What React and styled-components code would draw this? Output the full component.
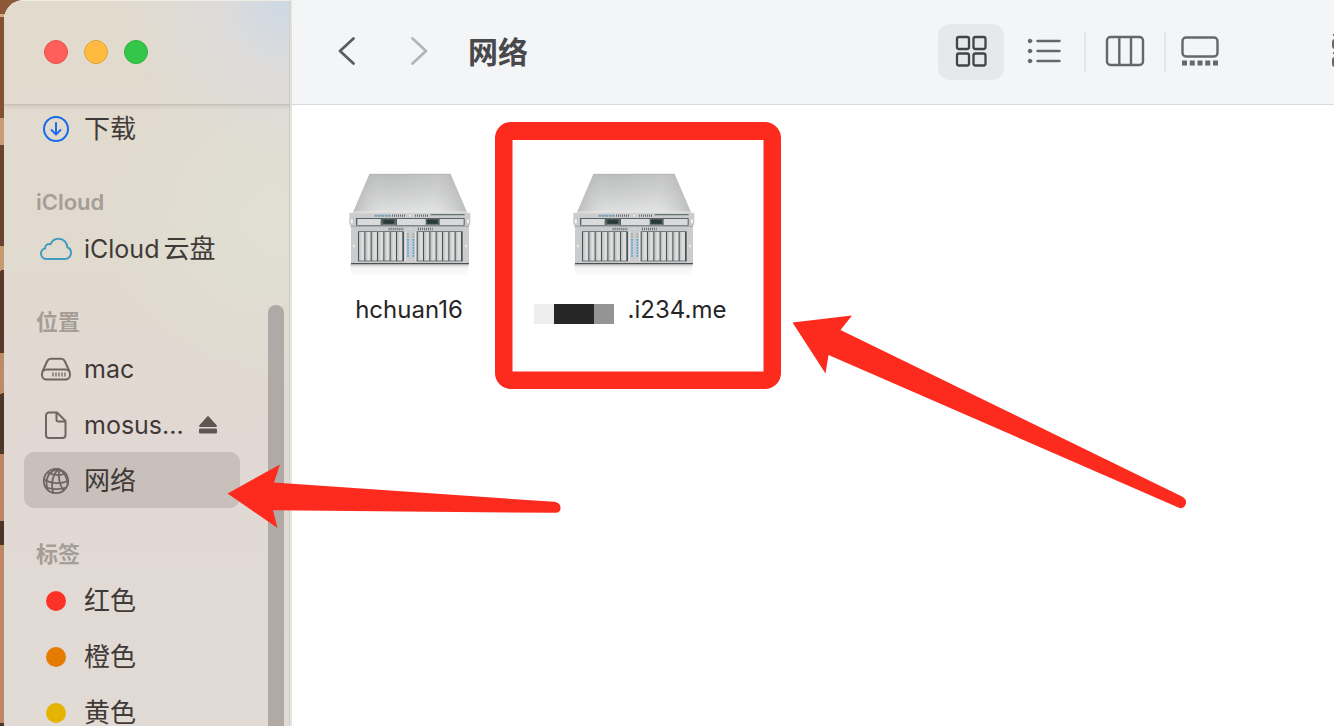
import React from 'react';
import styled, { createGlobalStyle } from 'styled-components';

const GlobalStyle = createGlobalStyle`
  * {
    box-sizing: border-box;
  }
  body {
    margin: 0;
    font-family: Inter, 'Noto Sans CJK SC', sans-serif;
    overflow: hidden;
  }
  button {
    border: 0;
    padding: 0;
    background: none;
    font: inherit;
    color: inherit;
  }
  svg {
    display: block;
    flex: none;
  }
`;

const Desktop = styled.div`
  position: relative;
  height: 100vh;
  padding-left: 4px;
  overflow: hidden;
  background: linear-gradient(
    172deg,
    #8c5838 0 14px,
    #d8a680 14px 17px,
    #84502f 17px 117px,
    #c89d75 117px 144px,
    #6a422e 144px 244px,
    #c69a70 244px 268px,
    #58392a 268px 350px,
    #bd8b66 350px 390px,
    #4e3629 390px 450px,
    #bd8766 450px 516px,
    #4a3528 516px 540px,
    #bd8766 540px 716px,
    #4a3528 716px
  );
`;

const Window = styled.div`
  display: flex;
  height: 100%;
  border-top-left-radius: 20px;
  overflow: hidden;
  background: #fff;
`;

const Sidebar = styled.aside`
  position: relative;
  display: flex;
  flex-direction: column;
  flex: none;
  width: 288px;
  border-right: 2px solid #e6e6e1;
  box-shadow: inset 0 1px 0 #f0ece6, inset -1px 0 0 #cfcdc6;
  background:
    radial-gradient(circle at 100% 0, #cdd8e5 0, rgba(218, 220, 224, 0.7) 70px, rgba(224, 219, 214, 0) 170px),
    radial-gradient(circle at 95% 220px, #e0e0d3 0, rgba(224, 224, 211, 0) 170px),
    linear-gradient(#e2dacd, #e1dacf 35%, #e1d8d3 60%, #e1dad5);
`;

const SidebarHeader = styled.div`
  display: flex;
  flex: none;
  align-items: center;
  gap: 16px;
  height: 105px;
  padding-left: 40px;
  border-bottom: 1px solid #c5c1ba;
  box-shadow: 0 2px 3px rgba(90, 80, 70, 0.12);
`;

const TrafficLight = styled.button`
  width: 24px;
  height: 24px;
  border: 1px solid ${({ $edge }) => $edge};
  border-radius: 50%;
  background: ${({ $color }) => $color};
`;

const SidebarScroll = styled.nav`
  flex: 1;
  min-height: 0;
  overflow: hidden;
`;

/* the list is scrolled a little way under the header */
const SidebarList = styled.div`
  margin: -5px 50px 0 20px;
`;

const SectionTitle = styled.h2`
  margin: 0;
  padding: 28px 0 0 12px;
  font-size: 22px;
  font-weight: 600;
  line-height: 36px;
  color: #a59d96;
`;

const SidebarItem = styled.button`
  display: flex;
  align-items: center;
  gap: 12px;
  width: 100%;
  height: 56px;
  padding: 2px 0 0 16px;
  border-radius: 10px;
  line-height: 32px;
  text-align: left;
  white-space: nowrap;
  color: #3f3a37;
  background: ${({ $active }) => ($active ? '#c9c0bb' : 'transparent')};
`;

const IconSlot = styled.span`
  display: flex;
  justify-content: center;
  width: 32px;
  color: #6e6662;
`;

const ItemName = styled.span`
  display: flex;
  align-items: baseline;
  gap: 4px;
`;

const Latin = styled.span`
  font-size: 25px;
`;

const Hanzi = styled.span`
  font-size: 26px;
`;

const Eject = styled.span`
  padding-left: 3px;
`;

const Tag = styled.span`
  width: 20px;
  height: 20px;
  border-radius: 50%;
  background: ${({ $color }) => $color};
`;

const Scrollbar = styled.div`
  position: absolute;
  top: 305px;
  right: 6px;
  bottom: 0;
  width: 16px;
  border-radius: 8px 8px 0 0;
  background: #afaaa5;
`;

const Main = styled.main`
  display: flex;
  flex: 1;
  flex-direction: column;
  min-width: 0;
`;

const Toolbar = styled.header`
  display: flex;
  flex: none;
  align-items: center;
  height: 105px;
  padding-left: 37px;
  border-bottom: 1px solid #dadbdc;
  overflow: hidden;
  background: #f4f5f7;
`;

const NavButtons = styled.div`
  display: flex;
  gap: 36px;
`;

const NavButton = styled.button`
  display: flex;
  align-items: center;
  justify-content: center;
  width: 36px;
  height: 56px;
  padding-bottom: 2px;
  color: ${({ disabled }) => (disabled ? '#b4b5b7' : '#5b5c5e')};
`;

const Title = styled.h1`
  flex: 1;
  margin: 0 0 0 31px;
  font-size: 30px;
  font-weight: 700;
  line-height: 40px;
  color: #49494b;
`;

const ViewButtons = styled.div`
  display: flex;
  align-items: center;
  gap: 7px;
`;

const ViewButton = styled.button`
  display: flex;
  align-items: center;
  justify-content: center;
  width: ${({ $width }) => $width || 66}px;
  height: 56px;
  padding-bottom: 2px;
  border-radius: 12px;
  color: ${({ $active }) => ($active ? '#434446' : '#66676a')};
  background: ${({ $active }) => ($active ? '#e7e8ea' : 'transparent')};
`;

const Divider = styled.span`
  width: 2px;
  height: 40px;
  background: #e5e6e8;
`;

/* runs off the right edge of the window */
const GroupButton = styled.button`
  flex: none;
  width: 36px;
  margin: 0 -34px 0 105px;
  padding-bottom: 2px;
  color: #66676a;
`;

const Files = styled.div`
  display: flex;
  flex-wrap: wrap;
  padding: 60px 6px;
`;

const File = styled.button`
  display: flex;
  flex-direction: column;
  align-items: center;
  gap: 15px;
  width: 224px;
`;

const FileName = styled.span`
  display: flex;
  align-items: center;
  gap: 14px;
  padding-right: ${({ $masked }) => ($masked ? '8px' : '2px')};
  font-size: 24px;
  line-height: 30px;
  color: #262626;
`;

const Mask = styled.span`
  width: 80px;
  height: 20px;
  margin-top: 8px;
  background: linear-gradient(90deg, #ededed 0 20px, #262626 20px 60px, #949494 60px);
`;

const Annotations = styled.svg`
  position: absolute;
  top: 0;
  left: 0;
  pointer-events: none;
`;

const DownloadIcon = () => (
  <svg width="28" height="28" viewBox="0 0 28 28" fill="none" stroke="#1a6be8" strokeWidth="2" strokeLinecap="round" strokeLinejoin="round">
    <circle cx="14" cy="14" r="12" />
    <path d="M14 8v11M9.500 15l4.500 4.500 4.500-4.500" />
  </svg>
);

const CloudIcon = () => (
  <svg width="32" height="24" viewBox="0 0 32 24" fill="none" stroke="#409dc0" strokeWidth="2" strokeLinejoin="round">
    <path d="M7 22C3.500 22 1 19.600 1 16.600c0-2.700 1.700-4.600 4.200-5.200-.4-3.200 2.600-5.200 5.400-4.200C12 3.600 15 1.700 18.500 1.700c5 0 8.700 3.700 8.800 8.600 2.300.8 3.700 2.900 3.700 5.500 0 3.500-2.700 6.200-6.300 6.200z" />
  </svg>
);

const DriveIcon = () => (
  <svg width="30" height="24" viewBox="0 0 30 24" fill="none" stroke="currentColor" strokeWidth="2" strokeLinejoin="round">
    <path d="M1.500 14.500 6.300 4C7.100 2.300 8 1.700 9.700 1.700h10.600c1.700 0 2.600.6 3.400 2.300l4.800 10.500" />
    <rect x="1" y="12.500" width="28" height="10" rx="4.500" />
    <path d="M12 15.500v4M15 15.500v4M18 15.500v4M21 15.500v4M24 15.500v4" strokeWidth="1.300" />
  </svg>
);

const DocumentIcon = () => (
  <svg width="24" height="28" viewBox="0 0 24 28" fill="none" stroke="currentColor" strokeWidth="2" strokeLinejoin="round">
    <path d="M5 1.500h8L21.500 10v14a3 3 0 0 1-3 3H5a3 3 0 0 1-3-3V4.500a3 3 0 0 1 3-3z" />
    <path d="M12.500 1.500v7a2 2 0 0 0 2 2h7" />
  </svg>
);

const EjectIcon = () => (
  <svg width="18" height="18" viewBox="0 0 18 18" fill="#5f5753">
    <path d="M8.200.6a1.200 1.200 0 0 1 1.600 0l7.800 8.600c.7.800.3 1.800-.7 1.800H1.100c-1 0-1.400-1-.7-1.800z" />
    <rect y="12.500" width="18" height="5" rx="1" />
  </svg>
);

const GlobeIcon = () => (
  <svg width="28" height="28" viewBox="0 0 28 28" fill="none" stroke="currentColor" strokeWidth="1.800" strokeLinecap="round">
    <circle cx="14" cy="14" r="12.200" />
    <path d="M17 2.200C11 6 8.500 16 11.200 25.800M17 2.200C6.500 3.500 2.500 11.500 5.500 22.500M17 2.200c-.8 7.800.5 15.800 4.500 21.500M17 2.200c5.500 3.300 8.300 8.800 8.600 15" />
    <path d="M6 5.500c5.500 3 11.500 3.400 17.300 1M2 12.500c7 4.300 16.500 4.700 24 1.500M3.500 20c5.500 2.600 14.500 3 20.500.5" />
  </svg>
);

const Chevron = ({ flip }) => (
  <svg width="20" height="32" viewBox="0 0 20 32" fill="none" stroke="currentColor" strokeWidth="2.800" strokeLinecap="round" strokeLinejoin="round">
    <path d={flip ? 'M3.500 3.500 17 16 3.500 28.500' : 'M16.500 3.500 3 16l13.500 12.500'} />
  </svg>
);

const GridIcon = () => (
  <svg width="32" height="32" viewBox="0 0 32 32" fill="none" stroke="currentColor" strokeWidth="2.300">
    <rect x="2" y="2" width="12" height="12" rx="2" />
    <rect x="18.500" y="2" width="12" height="12" rx="2" />
    <rect x="2" y="18.500" width="12" height="12" rx="2" />
    <rect x="18.500" y="18.500" width="12" height="12" rx="2" />
  </svg>
);

const ListIcon = () => (
  <svg width="34" height="26" viewBox="0 0 34 26" fill="currentColor" stroke="currentColor" strokeLinecap="round">
    <circle cx="3" cy="3" r="1.800" />
    <circle cx="3" cy="13" r="1.800" />
    <circle cx="3" cy="23" r="1.800" />
    <path d="M10.500 3h22M10.500 13h22M10.500 23h22" strokeWidth="2.400" />
  </svg>
);

const ColumnsIcon = () => (
  <svg width="40" height="32" viewBox="0 0 40 32" fill="none" stroke="currentColor" strokeWidth="2.400">
    <rect x="2" y="2" width="36" height="28" rx="3.500" />
    <path d="M14.300 2v28M26 2v28" />
  </svg>
);

const GalleryIcon = () => (
  <svg width="38" height="30" viewBox="0 0 38 30" fill="none" stroke="currentColor" strokeWidth="2.400">
    <rect x="1.500" y="1.500" width="35" height="19" rx="3.500" />
    <path d="M1 27h36" strokeWidth="5" strokeDasharray="5 2.750" />
  </svg>
);

const GroupIcon = () => (
  <svg width="36" height="36" viewBox="0 0 36 36" fill="none" stroke="currentColor" strokeWidth="2">
    <path d="M1 2h34M1 20h34" />
    <rect x="1" y="7" width="8" height="8" rx="2" />
    <rect x="1" y="25" width="8" height="8" rx="2" />
  </svg>
);

const BAYS = [0, 1, 2, 3, 4, 5, 6];

const ServerIcon = () => (
  <svg width="140" height="115" viewBox="0 0 420 345">
    <defs>
      <linearGradient id="lid" x1="0" y1="0" x2="0" y2="1">
        <stop offset="0" stopColor="#b4b5b6" />
        <stop offset="0.5" stopColor="#c6c7c8" />
        <stop offset="1" stopColor="#dcdddd" />
      </linearGradient>
      <linearGradient id="lidShade" x1="0" y1="0" x2="1" y2="0">
        <stop offset="0" stopColor="#9a9b9c" stopOpacity="0.5" />
        <stop offset="0.3" stopColor="#ffffff" stopOpacity="0.1" />
        <stop offset="0.7" stopColor="#ffffff" stopOpacity="0.2" />
        <stop offset="1" stopColor="#9a9b9c" stopOpacity="0.5" />
      </linearGradient>
      <linearGradient id="bay" x1="0" y1="0" x2="1" y2="0">
        <stop offset="0" stopColor="#b9bdbd" />
        <stop offset="0.6" stopColor="#dfe2e1" />
        <stop offset="1" stopColor="#ced2d1" />
      </linearGradient>
      <linearGradient id="floor" x1="0" y1="0" x2="0" y2="1">
        <stop offset="0" stopColor="#c9c9c9" />
        <stop offset="0.25" stopColor="#f2f2f2" />
        <stop offset="1" stopColor="#ffffff" />
      </linearGradient>
    </defs>
    <path d="M30 298h356l-6 38H36z" fill="url(#floor)" />
    <path d="M88 28h244l50 116H38z" fill="url(#lid)" />
    <path d="M88 28h244l50 116H38z" fill="url(#lidShade)" />
    <path d="M88 28h244" stroke="#a3a4a5" strokeWidth="2" />
    <path d="M40 141h340" stroke="#e6e6e6" strokeWidth="3" />
    <path d="M28 144h363v36h-4v118H33V180h-5z" fill="#cbcccd" />
    <path d="M28 144h363" stroke="#dedede" strokeWidth="2" />
    <path d="M104 152h50" stroke="#789db5" strokeWidth="6" strokeDasharray="8 2" />
    <path d="M156 152h42M225 152h42" stroke="#6c6e70" strokeWidth="7" strokeDasharray="3 3" />
    <path d="M272 149h102" stroke="#66736f" strokeWidth="4" />
    <circle cx="211" cy="152" r="4" fill="#efefef" stroke="#aaaaaa" />
    <rect x="48" y="159" width="326" height="23" fill="#5a5f60" />
    <rect x="52" y="162" width="70" height="18" fill="#d9dadb" />
    <rect x="171" y="162" width="86" height="18" fill="#d9dadb" />
    <rect x="299" y="162" width="72" height="18" fill="#d9dadb" />
    <path d="M130 170h32M261 170h32" stroke="#263d38" strokeWidth="12" />
    <path d="M124 180h44M259 180h38" stroke="#8b9192" strokeWidth="3" />
    <rect x="31" y="160" width="9" height="17" rx="4" fill="#f4f4f4" stroke="#898a8b" />
    <rect x="379" y="160" width="9" height="17" rx="4" fill="#f4f4f4" stroke="#898a8b" />
    <path d="M30 184h358" stroke="#8c8e8f" strokeWidth="2" />
    <path d="M146 192h44M234 192h44" stroke="#66686a" strokeWidth="7" strokeDasharray="3 3" />
    <path d="M58 192h80M286 192h80" stroke="#b3b5b6" strokeWidth="3" strokeDasharray="3 9" />
    <circle cx="211" cy="191" r="4" fill="#e8e8e8" stroke="#9c9c9c" />
    <rect x="54" y="199" width="138" height="90" fill="#4b5152" />
    <rect x="230" y="199" width="138" height="90" fill="#4b5152" />
    {BAYS.map((bay) => (
      <React.Fragment key={bay}>
        <rect x={57 + bay * 19} y="201" width="16" height="86" fill="url(#bay)" />
        <rect x={233 + bay * 19} y="201" width="16" height="86" fill="url(#bay)" />
      </React.Fragment>
    ))}
    <path d="M196 200v88M227 200v88" stroke="#e6e6e6" strokeWidth="3" />
    <path d="M204 206v12M220 206v12" stroke="#85898b" strokeWidth="5" strokeDasharray="3 5" />
    <path d="M204 222v54M220 222v54" stroke="#63a9dc" strokeWidth="6" strokeDasharray="5 3" />
    <circle cx="42" cy="243" r="4" fill="#ededed" />
    <circle cx="378" cy="243" r="4" fill="#ededed" />
    <circle cx="211" cy="284" r="3" fill="#eeeeee" stroke="#999999" />
    <path d="M33 296h354" stroke="#4c5051" strokeWidth="4" />
  </svg>
);

const SECTIONS = [
  {
    items: [{ name: '下载', icon: <DownloadIcon /> }],
  },
  {
    title: 'iCloud',
    items: [{ latin: 'iCloud', name: '云盘', icon: <CloudIcon /> }],
  },
  {
    title: '位置',
    items: [
      { latin: 'mac', icon: <DriveIcon /> },
      { latin: 'mosus...', icon: <DocumentIcon />, eject: true },
      { name: '网络', icon: <GlobeIcon />, active: true },
    ],
  },
  {
    title: '标签',
    items: [
      { name: '红色', icon: <Tag $color="#fc3226" /> },
      { name: '橙色', icon: <Tag $color="#e67b02" /> },
      { name: '黄色', icon: <Tag $color="#e5b302" /> },
    ],
  },
];

const App = () => (
  <Desktop>
    <GlobalStyle />
    <Window>
      <Sidebar>
        <SidebarHeader>
          <TrafficLight $color="#fe5f58" $edge="#e5504a" aria-label="关闭" />
          <TrafficLight $color="#febb3f" $edge="#e2a336" aria-label="最小化" />
          <TrafficLight $color="#32c748" $edge="#2bb03c" aria-label="缩放" />
        </SidebarHeader>
        <SidebarScroll>
          <SidebarList>
            {SECTIONS.map((section, index) => (
              <React.Fragment key={index}>
                {section.title && <SectionTitle>{section.title}</SectionTitle>}
                {section.items.map((item) => (
                  <SidebarItem key={item.name || item.latin} $active={item.active}>
                    <IconSlot>{item.icon}</IconSlot>
                    <ItemName>
                      {item.latin && <Latin>{item.latin}</Latin>}
                      {item.name && <Hanzi>{item.name}</Hanzi>}
                    </ItemName>
                    {item.eject && (
                      <Eject>
                        <EjectIcon />
                      </Eject>
                    )}
                  </SidebarItem>
                ))}
              </React.Fragment>
            ))}
          </SidebarList>
        </SidebarScroll>
        <Scrollbar />
      </Sidebar>
      <Main>
        <Toolbar>
          <NavButtons>
            <NavButton aria-label="后退">
              <Chevron />
            </NavButton>
            <NavButton aria-label="前进" disabled>
              <Chevron flip />
            </NavButton>
          </NavButtons>
          <Title>网络</Title>
          <ViewButtons>
            <ViewButton $active aria-label="图标">
              <GridIcon />
            </ViewButton>
            <ViewButton aria-label="列表">
              <ListIcon />
            </ViewButton>
            <Divider />
            <ViewButton $width={64} aria-label="分栏">
              <ColumnsIcon />
            </ViewButton>
            <Divider />
            <ViewButton $width={54} aria-label="画廊">
              <GalleryIcon />
            </ViewButton>
          </ViewButtons>
          <GroupButton aria-label="群组">
            <GroupIcon />
          </GroupButton>
        </Toolbar>
        <Files>
          <File>
            <ServerIcon />
            <FileName>hchuan16</FileName>
          </File>
          <File>
            <ServerIcon />
            <FileName $masked>
              <Mask />
              .i234.me
            </FileName>
          </File>
        </Files>
      </Main>
    </Window>
    <Annotations width="1200" height="540" viewBox="0 0 1200 540" fill="#fc2b1e">
      <path fillRule="evenodd" d="M511 122h254a16 16 0 0 1 16 16v235a16 16 0 0 1-16 16H511a16 16 0 0 1-16-16V138a16 16 0 0 1 16-16zM512.500 140v231.500h251V140z" />
      <path d="M227.500 493.500 280 464.500l-6 18 280 19.300c4.500.4 6.500 2.700 6.500 6 0 3-1.500 5-5 5L273 510.300l4.500 17.700z" />
      <path d="M792.500 322.500 852 315.500l-11.500 14.500L1182 496.500c3 1.600 4.500 4 4 6.500-.8 3.500-3 6-6.500 5L828.500 355l-3 18.500z" />
    </Annotations>
  </Desktop>
);

export default App;
